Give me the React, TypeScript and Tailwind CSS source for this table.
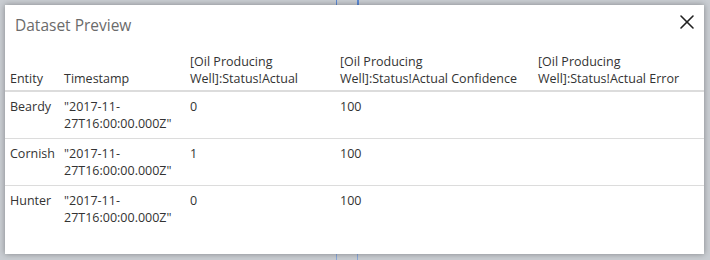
import { X } from "lucide-react";

type Row = { entity: string; actual: string; confidence: string; error: string };

const rows: Row[] = [
  { entity: "Beardy", actual: "0", confidence: "100", error: "" },
  { entity: "Cornish", actual: "1", confidence: "100", error: "" },
  { entity: "Hunter", actual: "0", confidence: "100", error: "" },
];

const font = { fontFamily: "'Open Sans', 'Noto Sans', sans-serif" };

export default function App() {
  return (
    <div className="relative w-[710px] h-[260px] overflow-hidden bg-[#c9cdd2]" style={font}>
      {/* page behind the dialog */}
      <div className="absolute left-[336px] top-0 h-[6px] w-px bg-[#5b8ad6]" />
      <div className="absolute left-[357px] top-0 h-[6px] w-[2px] bg-[#5b8ad6]" />
      <div className="absolute left-[336px] bottom-0 h-[6px] w-px bg-[#8aa9dc]" />
      <div className="absolute left-[357px] bottom-0 h-[6px] w-px bg-[#8aa9dc]" />

      <div className="absolute left-[5px] top-[5px] w-[699px] h-[249px] bg-white shadow-[0_0_6px_rgba(0,0,0,0.35)] flex flex-col">
        <div className="flex items-start justify-between h-[48px] pl-[10px] pr-[5px]">
          <span className="pt-[10px] leading-[20px] text-[15.5px] text-[#6b6b6b]">Dataset Preview</span>
          <X className="mt-[5px] w-6 h-6 text-[#222]" strokeWidth={1.6} />
        </div>

        <table className="w-full table-fixed text-[12.5px] text-[#333] border-collapse leading-[17px]">
          <colgroup>
            <col className="w-[59px]" />
            <col className="w-[126px]" />
            <col className="w-[150px]" />
            <col className="w-[198px]" />
            <col />
          </colgroup>
          <thead>
            <tr className="border-b-2 border-[#dcdcdc] align-bottom">
              <th className="font-normal text-left pl-[5px] pb-[3px]">Entity</th>
              <th className="font-normal text-left pb-[3px]">Timestamp</th>
              <th className="font-normal text-left pb-[3px]">[Oil Producing<br />Well]:Status!Actual</th>
              <th className="font-normal text-left pb-[3px]">[Oil Producing<br />Well]:Status!Actual Confidence</th>
              <th className="font-normal text-left pb-[3px]">[Oil Producing<br />Well]:Status!Actual Error</th>
            </tr>
          </thead>
          <tbody>
            {rows.map((r, i) => (
              <tr key={r.entity} className={i < rows.length - 1 ? "border-b border-[#dcdcdc] align-top" : "align-top"}>
                <td className="pl-[5px] pt-[6px] pb-[6px]">{r.entity}</td>
                <td className="pt-[6px] pb-[6px]">"2017-11-<br />27T16:00:00.000Z"</td>
                <td className="pt-[6px] pb-[6px]">{r.actual}</td>
                <td className="pt-[6px] pb-[6px]">{r.confidence}</td>
                <td className="pt-[6px] pb-[6px]">{r.error}</td>
              </tr>
            ))}
          </tbody>
        </table>
      </div>
    </div>
  );
}
